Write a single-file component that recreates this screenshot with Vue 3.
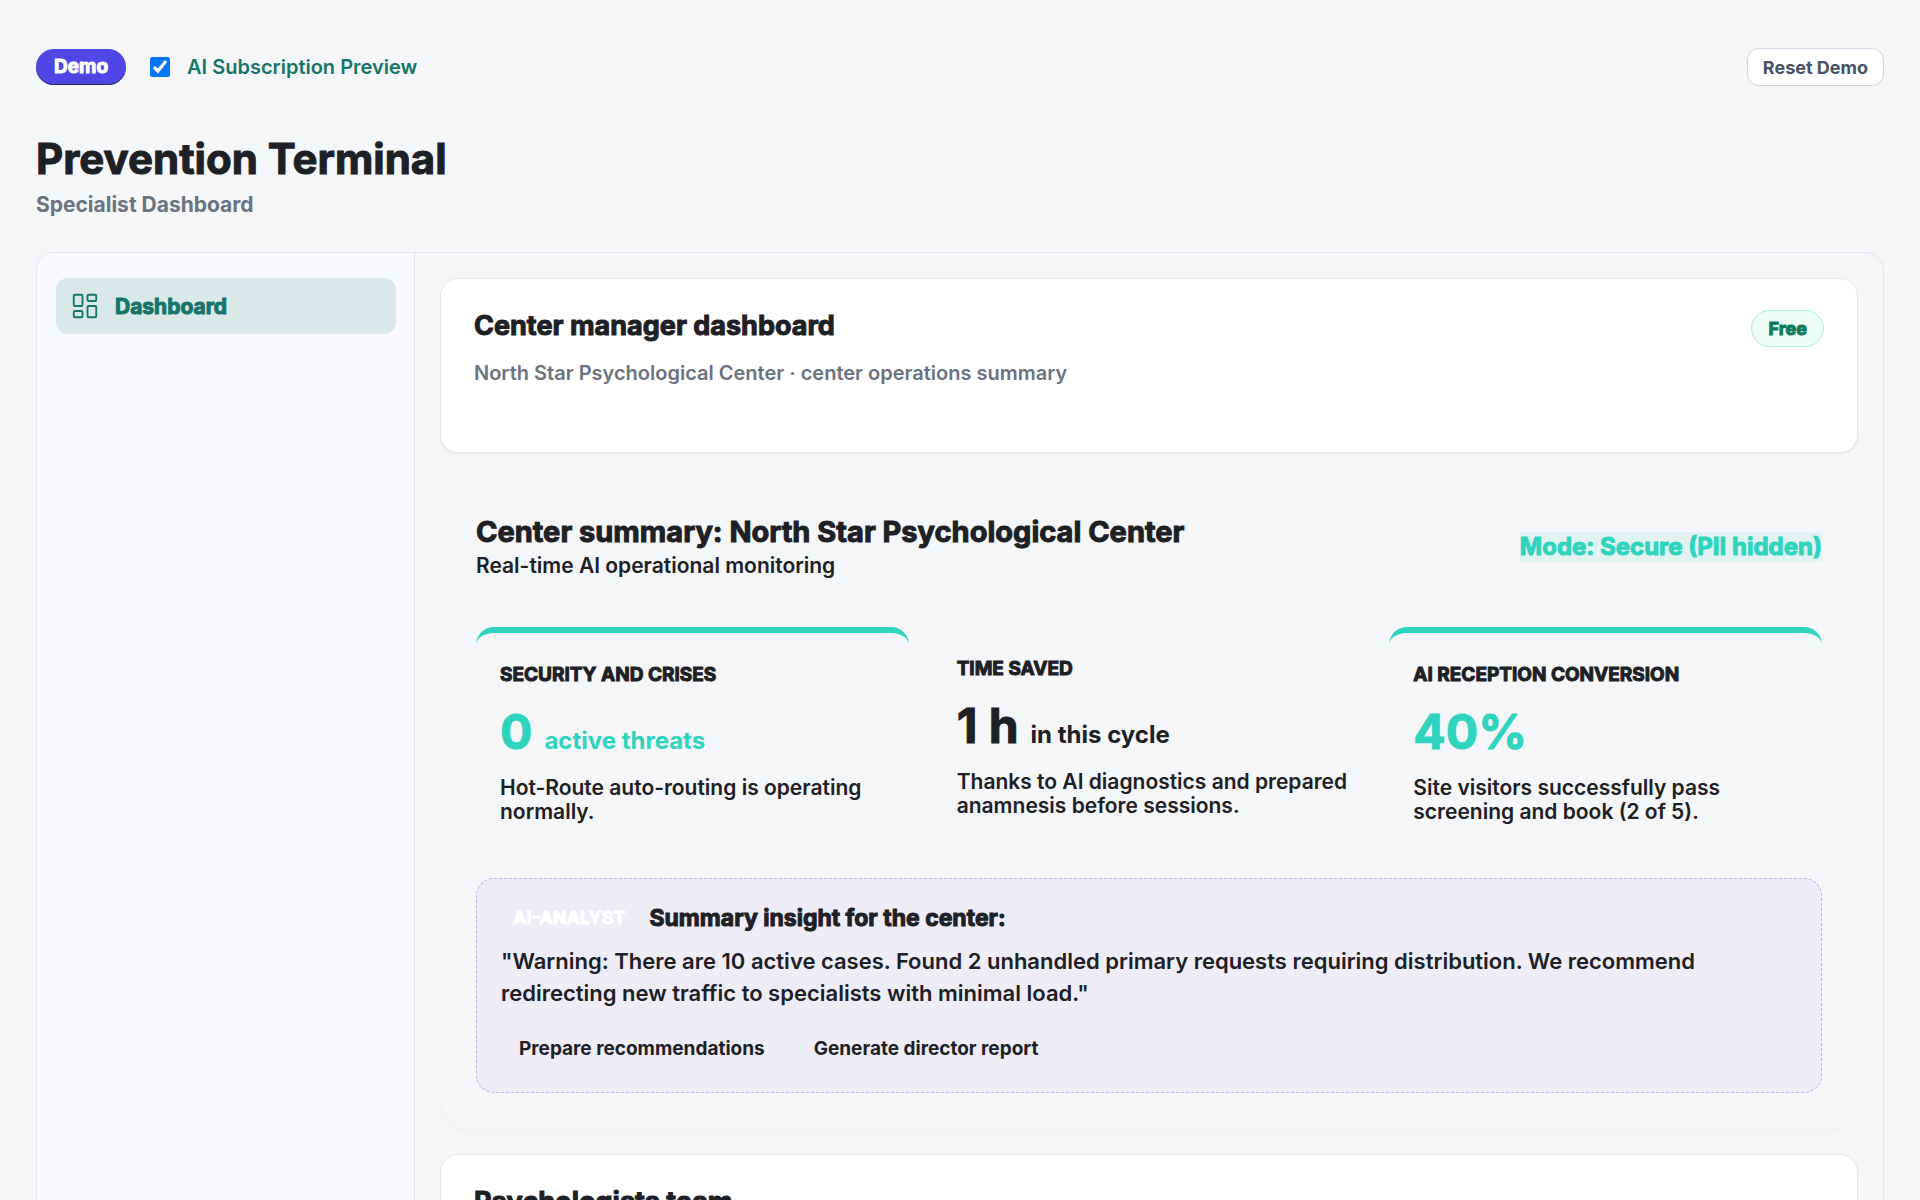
<script setup>
import { ref } from 'vue'

const aiPreview = ref(true)

const stats = [
  {
    title: 'Security and crises',
    value: '0',
    unit: 'active threats',
    note: 'Hot-Route auto-routing is operating normally.',
    accent: true,
  },
  {
    title: 'Time saved',
    value: '1 h',
    unit: 'in this cycle',
    note: 'Thanks to AI diagnostics and prepared anamnesis before sessions.',
    accent: false,
  },
  {
    title: 'AI reception conversion',
    value: '40%',
    unit: '',
    note: 'Site visitors successfully pass screening and book (2 of 5).',
    accent: true,
  },
]
</script>

<template>
  <div class="page">
    <header class="topbar">
      <span class="demo-pill heavy">Demo</span>
      <label class="preview">
        <input v-model="aiPreview" type="checkbox" />
        <span>AI Subscription Preview</span>
      </label>
      <button type="button" class="reset">Reset Demo</button>
    </header>

    <h1 class="heavy">Prevention Terminal</h1>
    <p class="role">Specialist Dashboard</p>

    <div class="shell">
      <nav class="sidebar">
        <a href="#" class="nav-item">
          <svg viewBox="0 0 24 24" width="30" height="30" aria-hidden="true">
            <rect x="3" y="3" width="7" height="9" rx="1" />
            <rect x="14" y="3" width="7" height="5" rx="1" />
            <rect x="14" y="12" width="7" height="9" rx="1" />
            <rect x="3" y="16" width="7" height="5" rx="1" />
          </svg>
          <span class="heavy">Dashboard</span>
        </a>
      </nav>

      <main class="content">
        <section class="card intro">
          <div>
            <h2 class="heavy">Center manager dashboard</h2>
            <p>North Star Psychological Center · center operations summary</p>
          </div>
          <span class="plan heavy">Free</span>
        </section>

        <section class="summary">
          <div class="summary-head">
            <div>
              <h2 class="heavy">Center summary: North Star Psychological Center</h2>
              <p>Real-time AI operational monitoring</p>
            </div>
            <span class="mode heavy">Mode: Secure (PII hidden)</span>
          </div>

          <div class="stats">
            <article v-for="s in stats" :key="s.title" class="stat" :class="{ accent: s.accent }">
              <h3 class="heavy">{{ s.title }}</h3>
              <div class="figure">
                <strong class="heavy">{{ s.value }}</strong>
                <span v-if="s.unit">{{ s.unit }}</span>
              </div>
              <p>{{ s.note }}</p>
            </article>
          </div>

          <div class="insight">
            <div class="insight-head">
              <span class="tag heavy">AI-ANALYST</span>
              <h3 class="heavy">Summary insight for the center:</h3>
            </div>
            <p>
              "Warning: There are 10 active cases. Found 2 unhandled primary requests requiring
              distribution. We recommend redirecting new traffic to specialists with minimal load."
            </p>
            <div class="actions">
              <button type="button">Prepare recommendations</button>
              <button type="button">Generate director report</button>
            </div>
          </div>
        </section>

        <section class="card team">
          <h2 class="heavy">Psychologists team</h2>
        </section>
      </main>
    </div>
  </div>
</template>

<style>
body {
  background: #f4f6f8;
}
</style>

<style scoped>
.page {
  box-sizing: border-box;
  min-height: 100vh;
  padding: 48px 36px;
  color: #1d2025;
  font-family: Inter, "Liberation Sans", sans-serif;
  font-size: 20px;
  font-weight: 600;
}

.page * {
  box-sizing: border-box;
}

h1,
h2,
h3,
p {
  margin: 0;
}

button {
  font: inherit;
  color: inherit;
  cursor: pointer;
}

.heavy {
  font-weight: 700;
  -webkit-text-stroke: 1px currentColor;
}

.topbar {
  display: flex;
  align-items: center;
  height: 38px;
}

.demo-pill {
  padding: 0 18px;
  border-radius: 18px;
  background: #4f46e5;
  box-shadow: inset 0 -1px 0 #1e2a5a;
  color: #fff;
  font-size: 19px;
  line-height: 36px;
}

.preview {
  display: flex;
  align-items: center;
  gap: 17px;
  margin-left: 24px;
  color: #16756a;
}

.preview input {
  width: 20px;
  height: 20px;
  margin: 0;
}

.reset {
  height: 38px;
  margin-left: auto;
  padding: 0 15px;
  border: 1px solid #cbd2df;
  border-radius: 12px;
  background: #fff;
  color: #475066;
  font-size: 18px;
  font-weight: 700;
}

h1 {
  margin-top: 49px;
  font-size: 42px;
  line-height: 48px;
}

.role {
  margin-top: 8px;
  color: #6b7280;
  font-size: 21px;
  font-weight: 700;
  line-height: 28px;
}

.shell {
  display: flex;
  margin-top: 33px;
  border: 1px solid #e2e6ec;
  border-radius: 18px;
  overflow: hidden;
}

.sidebar {
  flex: 0 0 378px;
  padding: 25px 18px 25px 19px;
  border-right: 1px solid #e2e6ec;
  background: #f9fafd;
}

.nav-item {
  display: flex;
  align-items: center;
  gap: 15px;
  height: 56px;
  padding: 0 14px;
  border-radius: 12px;
  background: #d9e9e7;
  color: #16756a;
  font-size: 21px;
  text-decoration: none;
}

.nav-item svg {
  fill: none;
  stroke: currentColor;
  stroke-width: 1.5;
}

.content {
  display: flex;
  flex: 1;
  flex-direction: column;
  gap: 24px;
  min-width: 0;
  padding: 25px;
}

.card {
  padding: 31px 33px;
  border: 1px solid #e5e7eb;
  border-radius: 18px;
  background: #fff;
  box-shadow: 0 1px 2px rgba(15, 23, 42, 0.06);
}

.card h2 {
  font-size: 27px;
  line-height: 32px;
}

.intro {
  display: flex;
  align-items: flex-start;
  justify-content: space-between;
  padding-bottom: 65px;
}

.intro p {
  margin-top: 17px;
  color: #6b7280;
  line-height: 28px;
}

.plan {
  padding: 0 16px;
  border: 1px solid #a7f0d0;
  border-radius: 19px;
  background: #ecfdf5;
  color: #0b7a5c;
  font-size: 18px;
  line-height: 35px;
}

.summary {
  padding: 36px 35px;
  border: 1px solid #f0f2f4;
  border-radius: 24px;
  box-shadow: 0 1px 2px rgba(15, 23, 42, 0.02);
}

.summary-head {
  display: flex;
  align-items: center;
  justify-content: space-between;
}

.summary-head h2 {
  font-size: 29px;
  line-height: 36px;
}

.summary-head p {
  margin-top: 2px;
  font-size: 21px;
  line-height: 28px;
}

.mode {
  background: #e0f3f0;
  color: #2fd4bf;
  font-size: 24px;
  line-height: 30px;
}

.stats {
  display: grid;
  grid-template-columns: repeat(3, 1fr);
  gap: 24px;
  margin-top: 47px;
}

.stat {
  padding: 24px 16px 24px 24px;
  border-radius: 18px;
}

.stat.accent {
  border-top: 6px solid #2fd4bf;
}

.stat h3 {
  font-size: 19px;
  line-height: 36px;
  text-transform: uppercase;
}

.figure {
  display: flex;
  align-items: baseline;
  gap: 12px;
  height: 58px;
  margin: 10px 0 15px;
  font-size: 24px;
  font-weight: 700;
  line-height: 58px;
}

.figure strong {
  font-size: 48px;
}

.accent .figure {
  color: #2fd4bf;
}

.stat p {
  font-size: 21px;
  line-height: 24px;
}

.insight {
  margin-top: 30px;
  padding: 24px;
  border: 1px dashed #c0b2ec;
  border-radius: 18px;
  background: #eeecf7;
}

.insight-head {
  display: flex;
  align-items: center;
  gap: 12px;
  line-height: 30px;
}

.tag {
  padding: 0 12px;
  color: #fff;
  font-size: 18px;
}

.insight-head h3 {
  font-size: 23px;
}

.insight p {
  margin-top: 12px;
  font-size: 22px;
  line-height: 32px;
}

.actions {
  display: flex;
  gap: 13px;
  margin-top: 19px;
}

.actions button {
  height: 40px;
  padding: 0 18px;
  border: 0;
  background: none;
  font-size: 19px;
  font-weight: 700;
}
</style>
